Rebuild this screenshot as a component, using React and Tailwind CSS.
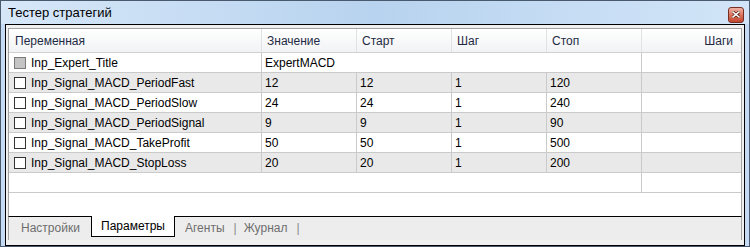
import React from 'react';

const rows = [
  { name: 'Inp_Signal_MACD_PeriodFast', value: '12', start: '12', step: '1', stop: '120' },
  { name: 'Inp_Signal_MACD_PeriodSlow', value: '24', start: '24', step: '1', stop: '240' },
  { name: 'Inp_Signal_MACD_PeriodSignal', value: '9', start: '9', step: '1', stop: '90' },
  { name: 'Inp_Signal_MACD_TakeProfit', value: '50', start: '50', step: '1', stop: '500' },
  { name: 'Inp_Signal_MACD_StopLoss', value: '20', start: '20', step: '1', stop: '200' },
];

const cols = 'grid grid-cols-[253px_95px_95px_95px_95px_97px]';

function Checkbox({ disabled }) {
  return (
    <span
      className={
        'inline-block w-[12px] h-[12px] border shrink-0 ' +
        (disabled ? 'border-[#7a7a7a] bg-[#c4c4c4]' : 'border-[#333] bg-white')
      }
    />
  );
}

function CloseButton() {
  return (
    <div className="w-[16px] h-[16px] rounded-[3px] border border-[#7a2d22] bg-gradient-to-b from-[#eeb3a6] via-[#d9745f] to-[#c4452d] flex items-center justify-center">
      <svg width="8" height="7" viewBox="0 0 8 7">
        <path d="M1 1 L7 6 M7 1 L1 6" stroke="#5a1a10" strokeWidth="3" strokeLinecap="square" />
        <path d="M1 1 L7 6 M7 1 L1 6" stroke="#ffffff" strokeWidth="1.6" strokeLinecap="square" />
      </svg>
    </div>
  );
}

export default function App() {
  return (
    <div
      className="w-[750px] h-[247px] bg-[#c4dbf3] border border-[#4a5a6e] flex flex-col text-[12px]"
      style={{ fontFamily: '"Liberation Sans", Arial, sans-serif' }}
    >
      {/* title bar */}
      <div className="h-[23px] shrink-0 flex items-center pl-[7px] pr-[5px] bg-gradient-to-r from-[#d6e7f8] via-[#b8d3ef] to-[#d2e5f8]">
        <span className="text-[13px] text-black">Тестер стратегий</span>
        <div className="ml-auto mt-[4px]">
          <CloseButton />
        </div>
      </div>

      <div className="mx-[4px] flex-1 border border-black bg-[#f0f0f0] pt-[3px] pb-px px-[2px] flex flex-col">
        {/* table */}
        <div className="h-[188px] bg-white border-x border-t border-[#a3a3a3]">
          {/* header */}
          <div className={cols + ' h-[24px] border-b border-[#d0d0d0] bg-gradient-to-b from-white to-[#f2f3f5] text-[#1e2a44]'}>
            <div className="pl-[6px] flex items-center border-r border-[#e2e2e2]">Переменная</div>
            <div className="pl-[5px] flex items-center border-r border-[#e2e2e2]">Значение</div>
            <div className="pl-[5px] flex items-center border-r border-[#e2e2e2]">Старт</div>
            <div className="pl-[5px] flex items-center border-r border-[#e2e2e2]">Шаг</div>
            <div className="pl-[5px] flex items-center border-r border-[#e2e2e2]">Стоп</div>
            <div className="pr-[6px] flex items-center justify-end">Шаги</div>
          </div>

          {/* title row */}
          <div className={cols + ' h-[20px] border-b border-[#cacaca] bg-white text-black'}>
            <div className="pl-[5px] flex items-center gap-[5px] border-r border-[#cacaca]">
              <Checkbox disabled />
              <span>Inp_Expert_Title</span>
            </div>
            <div className="col-span-4 pl-[3px] flex items-center border-r border-[#cacaca]">ExpertMACD</div>
            <div />
          </div>

          {rows.map((r, i) => (
            <div
              key={r.name}
              className={cols + ' h-[20px] border-b border-[#cacaca] text-black ' + (i % 2 === 0 ? 'bg-[#e9e9e9]' : 'bg-white')}
            >
              <div className="pl-[5px] flex items-center gap-[5px] border-r border-[#cacaca]">
                <Checkbox />
                <span>{r.name}</span>
              </div>
              <div className="pl-[3px] flex items-center border-r border-[#cacaca]">{r.value}</div>
              <div className="pl-[3px] flex items-center border-r border-[#cacaca]">{r.start}</div>
              <div className="pl-[3px] flex items-center border-r border-[#cacaca]">{r.step}</div>
              <div className="pl-[3px] flex items-center border-r border-[#cacaca]">{r.stop}</div>
              <div />
            </div>
          ))}

          {/* empty row */}
          <div className={cols + ' h-[20px] border-b border-[#cacaca] bg-white'}>
            <div />
            <div className="col-span-4 border-r border-[#cacaca]" />
            <div />
          </div>
        </div>

        {/* tabs */}
        <div className="h-[24px] border-t border-black bg-[#ededed] flex items-start text-[#6d6d6d] border-x border-x-[#a3a3a3]">
          <div className="w-[82px] h-[21px] pl-[12px] flex items-center">Настройки</div>
          <div className="-mt-px w-[84px] h-[21px] pl-[9px] flex items-center bg-white border-x border-b border-black text-black">
            Параметры
          </div>
          <div className="h-[21px] pl-[10px] flex items-center">Агенты</div>
          <div className="h-[21px] pl-[9px] flex items-center text-[#8a8a8a]">|</div>
          <div className="h-[21px] pl-[7px] flex items-center">Журнал</div>
          <div className="h-[21px] pl-[9px] flex items-center text-[#8a8a8a]">|</div>
        </div>
      </div>
    </div>
  );
}
